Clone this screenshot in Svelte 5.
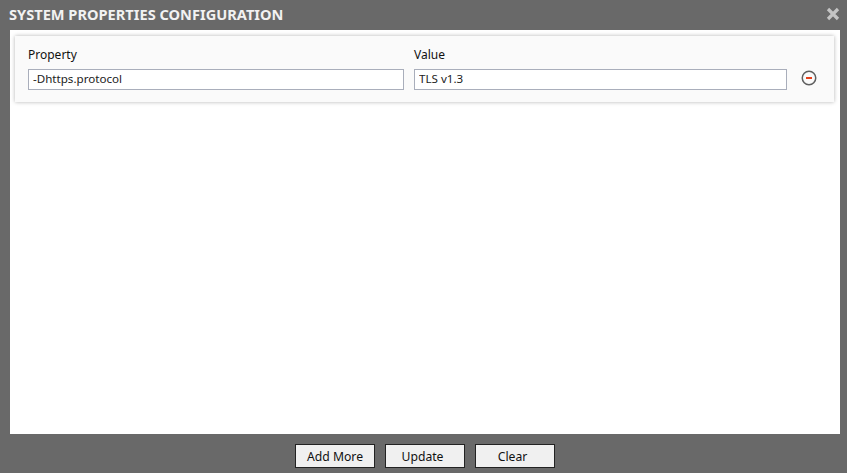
<script>
	let rows = [{ property: '-Dhttps.protocol', value: 'TLS v1.3' }];
</script>

<div class="dialog">
	<div class="dialog-title">
		<span>SYSTEM PROPERTIES CONFIGURATION</span>
		<svg class="close" width="14" height="14" viewBox="0 0 14 14" aria-hidden="true">
			<path d="M2 2 L12 12 M12 2 L2 12" stroke="#c4c4c4" stroke-width="3.2" fill="none" />
		</svg>
	</div>
	<div class="dialog-body">
		{#each rows as row}
			<div class="prop-card">
				<div class="field first">
					<label for="prop">Property</label>
					<input id="prop" type="text" value={row.property} />
				</div>
				<div class="field second">
					<label for="val">Value</label>
					<input id="val" type="text" value={row.value} />
				</div>
				<svg class="remove" width="16" height="16" viewBox="0 0 16 16" aria-hidden="true">
					<circle cx="8" cy="8" r="6.75" stroke="#5f5f5f" stroke-width="1.5" fill="#fafafa" />
					<rect x="5" y="7" width="6" height="2" fill="#e8401c" />
				</svg>
			</div>
		{/each}
	</div>
	<div class="dialog-actions">
		<button>Add More</button>
		<button class="short">Update</button>
		<button class="short">Clear</button>
	</div>
</div>

<style>
	:global(body) {
		background: #696969;
	}

	.dialog {
		width: 847px;
		height: 473px;
		display: flex;
		flex-direction: column;
		background-color: #696969;
		font-family: "Noto Sans", sans-serif;
		font-size: 11.6px;
		color: #111;
	}

	.dialog-title {
		height: 30px;
		flex: none;
		display: flex;
		justify-content: space-between;
		align-items: center;
		padding: 0 7px 2px 9px;
		box-sizing: border-box;
		color: #f2f2f2;
		font-size: 14.6px;
		font-weight: 700;
	}

	.dialog-body {
		flex: none;
		height: 404px;
		margin: 0 7px 0 10px;
		padding: 6px 6px 0 5px;
		box-sizing: border-box;
		background-color: #fff;
	}

	.prop-card {
		height: 66px;
		box-sizing: border-box;
		display: flex;
		align-items: flex-end;
		padding: 0 17px 12px 13px;
		background-color: #fafafa;
		box-shadow: 0 0 4px rgba(0, 0, 0, 0.3);
	}

	.field {
		display: flex;
		flex-direction: column;
		gap: 6px;
	}

	.first {
		width: 376px;
	}

	.second {
		width: 373px;
		margin-left: 10px;
	}

	label {
		line-height: 16px;
		font-size: 12px;
	}

	input {
		height: 21px;
		box-sizing: border-box;
		width: 100%;
		padding: 0 4px 2px;
		border: 1px solid #a9aebb;
		background: #fff;
		font: inherit;
		color: #222;
	}

	.remove {
		margin: 0 0 4px 14px;
		flex: none;
	}

	.dialog-actions {
		flex: 1;
		display: flex;
		justify-content: center;
		gap: 10px;
		padding-top: 10px;
		padding-left: 3px;
		box-sizing: border-box;
	}

	button {
		width: 80px;
		height: 24px;
		box-sizing: border-box;
		border: 1px solid #222;
		background-color: #f0f0f0;
		font: inherit;
		font-size: 12.2px;
		color: #111;
		padding: 0;
	}

	.short {
		padding-right: 5px;
	}
</style>
